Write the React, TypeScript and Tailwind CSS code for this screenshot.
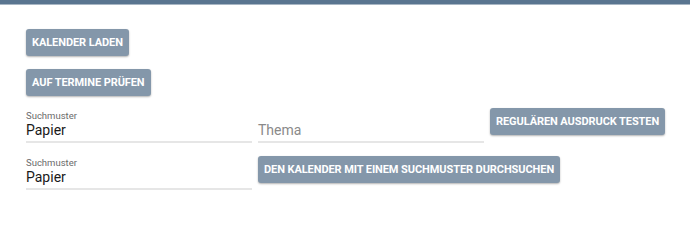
import React from "react";

function Btn({ children }: { children: React.ReactNode }) {
  return (
    <button className="h-[27px] px-[6px] rounded-[3px] bg-[#8497aa] text-white text-[11px] font-bold uppercase tracking-[-0.08px] shadow-[0_1px_2px_rgba(0,0,0,0.3)] leading-none whitespace-nowrap">
      {children}
    </button>
  );
}

function Field({ label, value, placeholder }: { label?: string; value?: string; placeholder?: string }) {
  return (
    <div className="w-[226px] flex flex-col">
      <div className="h-[11px] text-[9.5px] leading-[11px] text-[#6b6b6b]">{label}</div>
      <div className={`h-[18px] text-[14px] leading-[18px] ${value ? "text-[#1a1a1a]" : "text-[#8a8a8a]"}`}>
        {value ?? placeholder}
      </div>
      <div className="mt-[2px] h-[2px] bg-[#e6e6e6]" />
    </div>
  );
}

export default function App() {
  return (
    <div className="w-[690px] h-[204px] bg-white font-['Roboto',sans-serif] overflow-hidden">
      <div className="h-[4px] bg-[#5a7590]" />
      <div className="h-[1px] bg-[#a8b6c4]" />
      <div className="pl-[26px] pt-[24px] flex flex-col items-start">
        <Btn>Kalender laden</Btn>
        <div className="mt-[13px]">
          <Btn>Auf Termine prüfen</Btn>
        </div>
        <div className="mt-[14px] flex items-start gap-[6px]">
          <Field label="Suchmuster" value="Papier" />
          <Field placeholder="Thema" />
          <div className="mt-[-2px]">
            <Btn>Regulären Ausdruck testen</Btn>
          </div>
        </div>
        <div className="mt-[14px] flex items-start gap-[6px]">
          <Field label="Suchmuster" value="Papier" />
          <div className="mt-[-1px]">
            <Btn>Den Kalender mit einem Suchmuster durchsuchen</Btn>
          </div>
        </div>
      </div>
    </div>
  );
}
